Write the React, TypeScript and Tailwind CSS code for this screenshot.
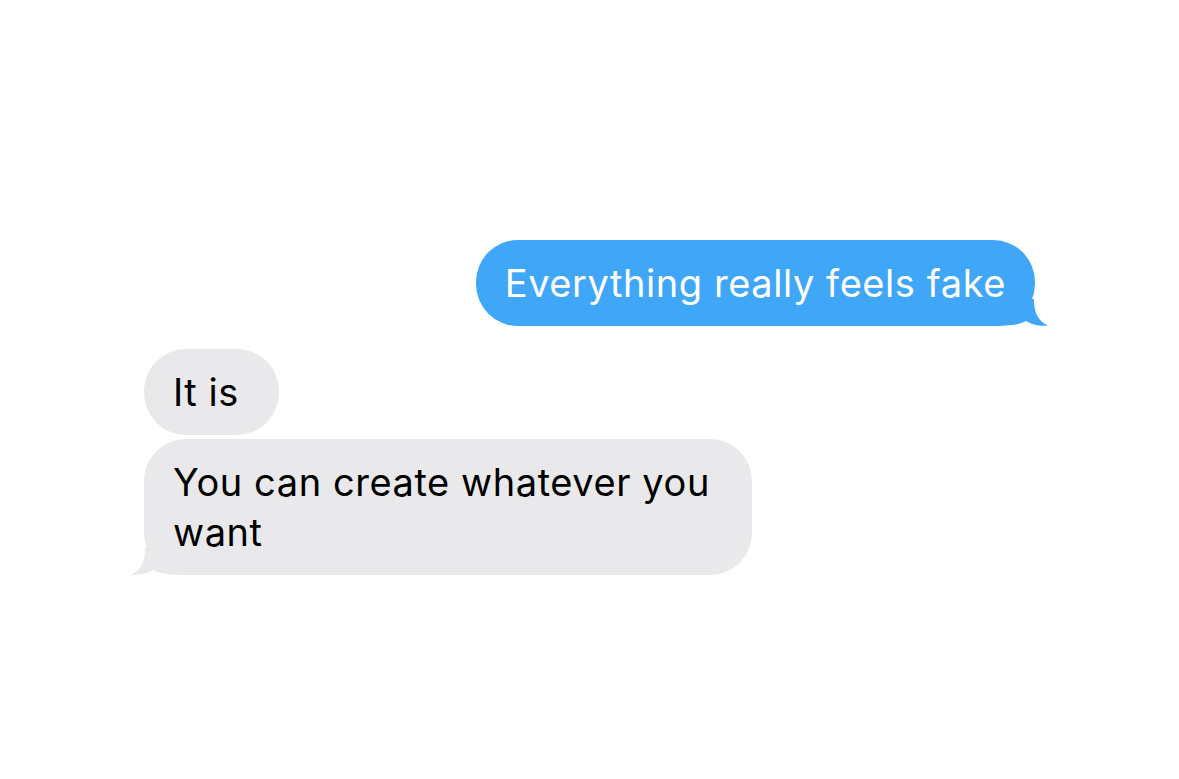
import React from "react";

const font = { fontFamily: "Inter, 'Noto Sans', sans-serif" };

function Tail({ side, color }: { side: "left" | "right"; color: string }) {
  // tail drawn for the right side, mirrored for the left
  return (
    <svg
      viewBox="0 0 60 27"
      className={
        side === "right"
          ? "absolute -right-[14px] bottom-0 h-[27px] w-[60px]"
          : "absolute -left-[14px] bottom-0 h-[27px] w-[60px] -scale-x-100"
      }
    >
      <path
        d="M0 0 H45 C45 14 49 22 59 26.5 C51 27.5 43 26 37 22 C30 26 20 27 0 27 Z"
        fill={color}
      />
    </svg>
  );
}

function Bubble({
  text,
  mine,
  tail,
}: {
  text: string;
  mine?: boolean;
  tail?: boolean;
}) {
  const color = mine ? "#3fa6f8" : "#e9e9eb";
  return (
    <div
      className={`relative max-w-[608px] rounded-[42px] py-[18px] text-[38px] leading-[50px] tracking-[0.015em] ${
        mine
          ? "self-end bg-[#3fa6f8] px-[29px] text-white"
          : "self-start bg-[#e9e9eb] pl-[29px] pr-[40px] text-black"
      }`}
    >
      {tail && <Tail side={mine ? "right" : "left"} color={color} />}
      <span className="relative">{text}</span>
    </div>
  );
}

export default function App() {
  return (
    <div className="min-h-[779px] w-full bg-white" style={font}>
      <div className="flex flex-col px-[144px] pt-[240px]">
        <Bubble text="Everything really feels fake" mine tail />
        <div className="mt-[23px] flex flex-col gap-[4px]">
          <Bubble text="It is" />
          <Bubble text="You can create whatever you want" tail />
        </div>
      </div>
    </div>
  );
}
